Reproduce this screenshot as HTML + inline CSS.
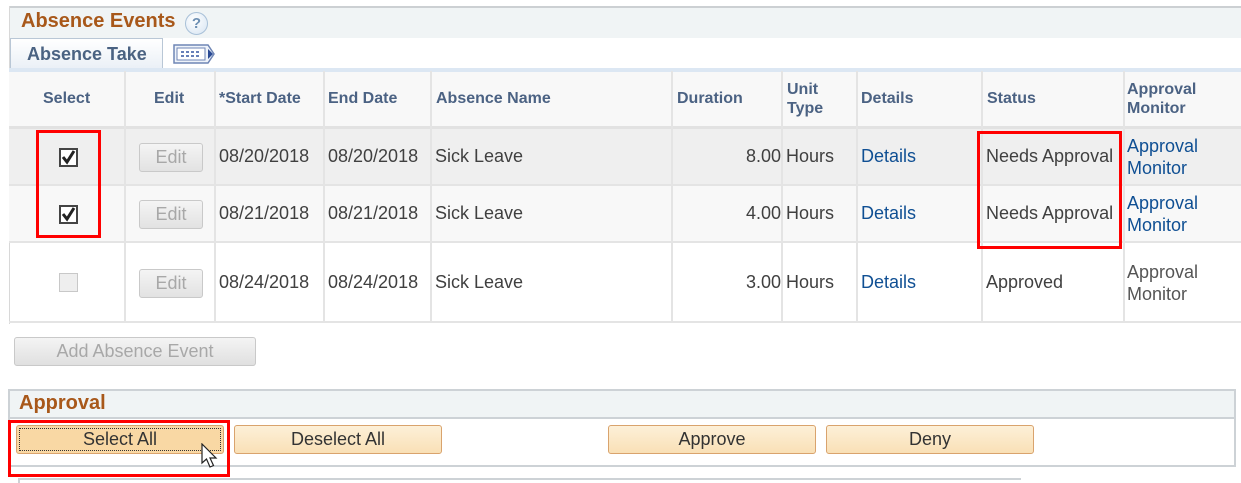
<!DOCTYPE html>
<html><head><meta charset="utf-8"><style>
*{margin:0;padding:0;box-sizing:border-box}
body{width:1241px;height:483px;background:#fff;font-family:"Liberation Sans",Arial,sans-serif;position:relative;overflow:hidden;color:#3a3a3a}
.a{position:absolute}
.h{font-weight:bold;font-size:16px;color:#4b6283}
.t{font-size:18px;color:#404040}
.lk{font-size:18px;color:#0f4f93}
.vl{position:absolute;top:71px;width:2px;height:251px;background:#e4e4e4}
.hl{position:absolute;left:9px;width:1232px;height:2px;background:#e4e4e4}
.eb{position:absolute;left:139px;width:64px;height:29px;border:1px solid #c9c9c9;border-radius:3px;background:linear-gradient(#f4f4f4,#e2e2e2);color:#a8a8a8;font-size:18px;text-align:center;line-height:27px}
.cb{position:absolute;left:59px;width:19px;height:19px;border:2px solid #444;background:#fff}
.ob{position:absolute;top:425px;height:29px;border:1px solid #d9a36d;border-radius:3px;background:linear-gradient(#fdf0d8,#f9e0b6);font-size:18px;color:#333;text-align:center;line-height:27px}
.red{position:absolute;border:3px solid #f00}
</style></head><body>
<div class="a" style="left:9px;top:6px;width:1232px;height:2px;background:#ccd0d3"></div>
<div class="a" style="left:9px;top:8px;width:1232px;height:30px;background:#f0f4f5"></div>
<div class="a" style="left:9px;top:6px;width:1px;height:318px;background:#d8d8d8"></div>
<div class="a" style="left:21px;top:10px;font-size:20px;font-weight:bold;color:#a8581a">Absence Events</div>
<div class="a" style="left:185px;top:12px;width:23px;height:23px;border-radius:50%;border:1px solid #a8c0d8;background:radial-gradient(circle at 40% 35%,#fff,#d6e4f2);color:#6d8fb3;font-weight:bold;font-size:15px;text-align:center;line-height:21px">?</div>
<div class="a" style="left:10px;top:38px;width:153px;height:32px;border:1px solid #b9c7d6;border-bottom:none;background:linear-gradient(#fff,#e9eff6);font-weight:bold;font-size:18px;color:#4a6282;padding:5px 0 0 16px">Absence Take</div>
<svg class="a" style="left:172px;top:42px" width="44" height="24" viewBox="0 0 44 24"><path d="M2 3H36L42 12L36 21H2Z" fill="#eef3fa" stroke="#6f86b5" stroke-width="1.5"/><rect x="5" y="6" width="28" height="12" fill="#fff" stroke="#6f86b5"/><path d="M9 10h3M14 10h3M19 10h3M24 10h3M9 14h3M14 14h3M19 14h3M24 14h3" stroke="#3355a0" stroke-width="1.5"/><path d="M36 7L41 12L36 17Z" fill="#2b4b95"/></svg>
<div class="a" style="left:9px;top:68px;width:1232px;height:4px;background:#dce7f3"></div>
<div class="a" style="left:9px;top:72px;width:1232px;height:55px;background:#f8f8f8"></div>
<div class="a" style="left:9px;top:127px;width:1232px;height:58px;background:#efefef"></div>
<div class="a" style="left:9px;top:185px;width:1232px;height:57px;background:#f8f8f8"></div>
<div class="hl" style="top:126px;height:3px;background:#e2e2e2"></div>
<div class="hl" style="top:184px"></div>
<div class="hl" style="top:241px"></div>
<div class="hl" style="top:321px"></div>
<div class="vl" style="left:124px"></div><div class="vl" style="left:214px"></div><div class="vl" style="left:323px"></div><div class="vl" style="left:430px"></div><div class="vl" style="left:671px"></div><div class="vl" style="left:781px"></div><div class="vl" style="left:856px"></div><div class="vl" style="left:981px"></div><div class="vl" style="left:1123px"></div>
<div class="a h" style="left:43px;top:90px">Select</div>
<div class="a h" style="left:154px;top:90px">Edit</div>
<div class="a h" style="left:219px;top:90px">*Start Date</div>
<div class="a h" style="left:328px;top:90px">End Date</div>
<div class="a h" style="left:436px;top:90px">Absence Name</div>
<div class="a h" style="left:677px;top:90px">Duration</div>
<div class="a h" style="left:787px;top:80px;line-height:19px">Unit<br>Type</div>
<div class="a h" style="left:861px;top:90px">Details</div>
<div class="a h" style="left:987px;top:90px">Status</div>
<div class="a h" style="left:1127px;top:80px;line-height:19px">Approval<br>Monitor</div>

<div class="cb" style="top:148px"></div><div class="cb" style="top:205px"></div>
<svg class="a" style="left:59px;top:148px" width="19" height="19"><path d="M4 9L8 14L15 3" stroke="#222" stroke-width="3" fill="none"/></svg>
<svg class="a" style="left:59px;top:205px" width="19" height="19"><path d="M4 9L8 14L15 3" stroke="#222" stroke-width="3" fill="none"/></svg>
<div class="a" style="left:59px;top:273px;width:19px;height:19px;border:1px solid #c8c8c8;background:#eee"></div>

<div class="eb" style="top:143px">Edit</div><div class="eb" style="top:200px">Edit</div><div class="eb" style="top:269px">Edit</div>

<div class="a t" style="left:219px;top:146px">08/20/2018</div><div class="a t" style="left:328px;top:146px">08/20/2018</div><div class="a t" style="left:435px;top:146px">Sick Leave</div><div class="a t" style="left:746px;top:146px">8.00</div><div class="a t" style="left:786px;top:146px">Hours</div><div class="a lk" style="left:861px;top:146px">Details</div><div class="a t" style="left:986px;top:146px">Needs Approval</div><div class="a lk" style="left:1127px;top:135px;line-height:22px">Approval<br>Monitor</div>
<div class="a t" style="left:219px;top:203px">08/21/2018</div><div class="a t" style="left:328px;top:203px">08/21/2018</div><div class="a t" style="left:435px;top:203px">Sick Leave</div><div class="a t" style="left:746px;top:203px">4.00</div><div class="a t" style="left:786px;top:203px">Hours</div><div class="a lk" style="left:861px;top:203px">Details</div><div class="a t" style="left:986px;top:203px">Needs Approval</div><div class="a lk" style="left:1127px;top:192px;line-height:22px">Approval<br>Monitor</div>
<div class="a t" style="left:219px;top:272px">08/24/2018</div><div class="a t" style="left:328px;top:272px">08/24/2018</div><div class="a t" style="left:435px;top:272px">Sick Leave</div><div class="a t" style="left:746px;top:272px">3.00</div><div class="a t" style="left:786px;top:272px">Hours</div><div class="a lk" style="left:861px;top:272px">Details</div><div class="a t" style="left:986px;top:272px">Approved</div><div class="a t" style="left:1127px;top:261px;line-height:22px;color:#555">Approval<br>Monitor</div>

<div class="red" style="left:36px;top:130px;width:65px;height:108px"></div>
<div class="red" style="left:977px;top:131px;width:145px;height:118px"></div>

<div class="a" style="left:14px;top:337px;width:242px;height:29px;border:1px solid #c9c9c9;border-radius:3px;background:linear-gradient(#f4f4f4,#e0e0e0);color:#a8a8a8;font-size:18px;text-align:center;line-height:27px">Add Absence Event</div>

<div class="a" style="left:8px;top:389px;width:1228px;height:78px;border:2px solid #cdd2d6"></div>
<div class="a" style="left:10px;top:391px;width:1224px;height:28px;background:#f0f4f5;border-bottom:2px solid #cdd2d6"></div>
<div class="a" style="left:19px;top:392px;font-size:20px;font-weight:bold;color:#a8581a">Approval</div>
<div class="ob" style="left:16px;width:208px;background:#f9d8a4;outline:1px dotted #333;outline-offset:-4px">Select All</div>
<div class="ob" style="left:234px;width:208px">Deselect All</div>
<div class="ob" style="left:608px;width:208px">Approve</div>
<div class="ob" style="left:826px;width:208px">Deny</div>
<div class="red" style="left:8px;top:420px;width:222px;height:57px"></div>
<svg class="a" style="left:200px;top:443px" width="22" height="28"><path d="M2 1V20L6.5 16L10 24L13.5 22.5L10 15H16Z" fill="#fff" stroke="#222" stroke-width="1.2"/></svg>
<div class="a" style="left:18px;top:478px;width:1003px;height:2px;background:#cdd2d6"></div>
<div class="a" style="left:18px;top:480px;width:2px;height:3px;background:#cdd2d6"></div>
</body></html>
